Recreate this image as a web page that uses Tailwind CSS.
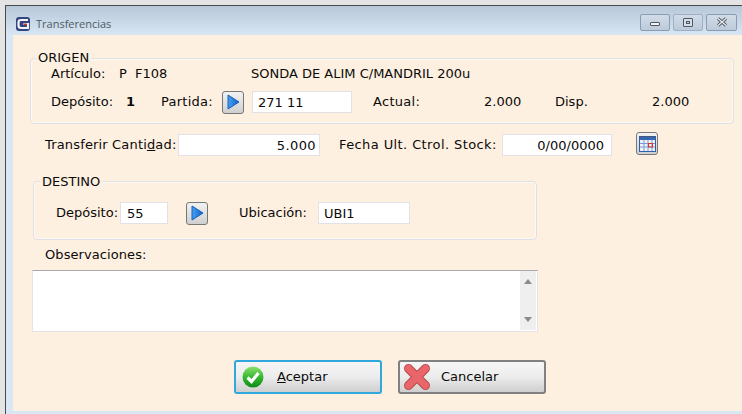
<!DOCTYPE html>
<html><head><meta charset="utf-8">
<script src="https://cdn.jsdelivr.net/npm/@tailwindcss/browser@4"></script>
</head>
<body class="m-0 overflow-hidden">
<div class="w-[742px] h-[414px] overflow-hidden bg-[#e4e4e4] pt-[5px] pl-[5px] font-['DejaVu_Sans',sans-serif] text-[13px] text-[#0a0a0a]">
  <svg width="0" height="0" class="absolute"><defs><linearGradient id="pl" x1="0" x2="1" y1="0" y2="0"><stop offset="0" stop-color="#4aa0f0"/><stop offset="1" stop-color="#0f62cc"/></linearGradient><linearGradient id="gl" x1="0" x2="0" y1="0" y2="1"><stop offset="0" stop-color="#8ee06f"/><stop offset=".55" stop-color="#2fb52a"/><stop offset="1" stop-color="#118a1a"/></linearGradient></defs></svg>
  <div class="w-[737px] h-[409px] border-l border-t border-[#4a4a4a] bg-[#d9e6f3] flex flex-col">
    <div class="h-[29px] shrink-0 flex items-center bg-gradient-to-b from-[#b7c8d9] to-[#d8e6f3] pl-[10px] pr-0">
      <svg width="14" height="14" viewBox="0 0 14 14" class="mt-[7px]"><rect width="14" height="14" rx="3" fill="#36457f"/><path d="M12 3H5Q2.5 3 2.5 5.5V8.5Q2.5 11 5 11H12V7H7.5" fill="none" stroke="#f2f4f8" stroke-width="2.2"/><rect x="8" y="6.5" width="3" height="1.6" fill="#d8342b"/></svg>
      <span class="ml-[6px] mt-[7px] font-['Open_Sans',sans-serif] text-[11px] text-[#4e5a66]">Transferencias</span>
      <div class="ml-auto flex gap-[3px] mt-[3px] mr-[5px]">
        <div class="w-[30px] h-[17px] rounded-[2px] border border-[#8a9cb4] bg-gradient-to-b from-[#d2dce8] to-[#bccadb] flex items-center justify-center"><div class="w-[10px] h-[4px] mt-[4px] bg-[#f4f4f4] border border-[#4c5560] rounded-[1px]"></div></div>
        <div class="w-[30px] h-[17px] rounded-[2px] border border-[#a0b0c4] bg-gradient-to-b from-[#d2dce8] to-[#bccadb] flex items-center justify-center"><div class="w-[10px] h-[9px] border border-[#4c5560] bg-[#d5dde8] flex items-center justify-center rounded-[1px]"><div class="w-[4px] h-[3px] border border-[#4c5560]"></div></div></div>
        <div class="w-[31px] h-[17px] rounded-[2px] border border-[#8a9cb4] bg-gradient-to-b from-[#d2dce8] to-[#bccadb] flex items-center justify-center"><svg width="12" height="10" viewBox="0 0 12 10"><path d="M2 1.5 L10 8.5 M10 1.5 L2 8.5" stroke="#4c5560" stroke-width="3"/><path d="M2 1.5 L10 8.5 M10 1.5 L2 8.5" stroke="#f2f2f2" stroke-width="1.2"/></svg></div>
      </div>
    </div>
    <div class="ml-[7px] h-[376px] bg-[#fef0e0] flex flex-col">
      <!-- ORIGEN -->
      <div class="relative ml-[17px] mt-[23px] w-[704px] h-[66px] border border-[#dfe0e6] shadow-[inset_0_0_0_1px_#fdf8f2] rounded-[4px]">
        <span class="absolute left-[5px] top-[-9px] bg-[#fef0e0] px-[2px] leading-[16px]">ORIGEN</span>
        <div class="flex items-center h-[16px] mt-[7px] ml-[20px]">
          <span class="w-[68px]">Artículo:</span><span class="w-[132px] whitespace-pre">P  F108</span><span>SONDA DE ALIM C/MANDRIL 200u</span>
        </div>
        <div class="flex items-center h-[22px] mt-[9px] ml-[20px]">
          <span class="w-[75px]">Depósito:</span><span class="w-[35px] font-bold">1</span><span class="w-[61px] tracking-[0.25px]">Partida:</span>
          <div class="w-[22px] h-[23px] rounded-[3px] border border-[#777] bg-gradient-to-b from-[#f2f2f2] to-[#cfcfcf] flex items-center justify-center"><svg width="13" height="16" viewBox="0 0 13 16"><path d="M1 1 L12 8 L1 15Z" fill="url(#pl)" stroke="#1560b8" stroke-width="1"/></svg></div>
          <div class="ml-[8px] w-[100px] h-[22px] bg-white border border-[#e2e2e6] pl-[5px] leading-[22px]">271 11</div>
          <span class="ml-[21px] w-[111px] tracking-[0.3px]">Actual:</span><span class="w-[71px]">2.000</span><span class="w-[97px]">Disp.</span><span>2.000</span>
        </div>
      </div>
      <!-- cantidad -->
      <div class="flex items-center h-[32px] mt-[5px]">
        <span class="ml-[32px] w-[133px] tracking-[0.16px] whitespace-nowrap">Transferir Canti<u>d</u>ad:</span>
        <div class="w-[142px] h-[22px] bg-white border border-[#e2e2e6] text-right pr-[3px] tracking-[0.4px] leading-[22px]">5.000</div>
        <span class="ml-[19px] w-[163px] tracking-[0.4px] whitespace-nowrap">Fecha Ult. Ctrol. Stock:</span>
        <div class="w-[110px] h-[22px] bg-white border border-[#e2e2e6] text-right pr-[7px] leading-[22px]">0/00/0000</div>
        <div class="ml-[24px] w-[22px] h-[23px] mt-[-4px] rounded-[3px] border border-[#777] bg-gradient-to-b from-[#f2f2f2] to-[#cfcfcf] flex items-center justify-center">
          <svg width="17" height="17" viewBox="0 0 17 17"><rect x=".5" y="1.5" width="16" height="15" fill="#eef2fa" stroke="#2f5fa8"/><rect x="1" y="2" width="15" height="3" fill="#3a66b0"/><path d="M1 1V2M3 1V2M5 1V2M7 1V2M9 1V2M11 1V2M13 1V2M15 1V2" stroke="#555"/><path d="M1 8.5H16M1 12H16M5 5V16M9 5V16M13 5V16" stroke="#7d9bd0" stroke-width="1"/><rect x="9.5" y="8.5" width="4" height="3.5" fill="none" stroke="#e03020"/></svg>
        </div>
      </div>
      <!-- DESTINO -->
      <div class="relative ml-[20px] mt-[20px] w-[504px] h-[59px] border border-[#dfe0e6] shadow-[inset_0_0_0_1px_#fdf8f2] rounded-[4px]">
        <span class="absolute left-[6px] top-[-8px] bg-[#fef0e0] px-[2px] leading-[16px]">DESTINO</span>
        <div class="flex items-center h-[22px] mt-[20px] ml-[22px]">
          <span class="w-[64px]">Depósito:</span>
          <div class="w-[48px] h-[22px] bg-white border border-[#e2e2e6] pl-[6px] leading-[22px]">55</div>
          <div class="ml-[18px] w-[22px] h-[23px] rounded-[3px] border border-[#777] bg-gradient-to-b from-[#f2f2f2] to-[#cfcfcf] flex items-center justify-center"><svg width="13" height="16" viewBox="0 0 13 16"><path d="M1 1 L12 8 L1 15Z" fill="url(#pl)" stroke="#1560b8" stroke-width="1"/></svg></div>
          <span class="ml-[31px] w-[79px]">Ubicación:</span>
          <div class="w-[92px] h-[22px] bg-white border border-[#e2e2e6] pl-[5px] leading-[22px]">UBI1</div>
        </div>
      </div>
      <div class="ml-[32px] mt-[7px] leading-[16px] tracking-[0.08px]">Observaciones:</div>
      <!-- textarea -->
      <div class="ml-[19px] mt-[7px] w-[506px] h-[62px] bg-white border border-[#e4e4e8] border-t-[#a9a9a9] flex justify-end">
        <div class="w-[16px] bg-[#efefef] mr-[1px] mb-[1px] flex flex-col justify-between items-center py-[8px]">
          <div class="w-0 h-0 border-x-[4px] border-x-transparent border-b-[5px] border-b-[#8a8a8a]"></div>
          <div class="w-0 h-0 border-x-[4px] border-x-transparent border-t-[5px] border-t-[#8a8a8a]"></div>
        </div>
      </div>
      <!-- buttons -->
      <div class="flex ml-[221px] mt-[28px] gap-[16px]">
        <div class="w-[148px] h-[34px] rounded-[3px] border-2 border-[#31a8dc] bg-gradient-to-b from-[#f6f6f6] via-[#ececec] to-[#cfcfcf] flex items-center pl-[6px]">
          <svg width="22" height="22" viewBox="0 0 22 22"><circle cx="11" cy="11" r="10.5" fill="url(#gl)"/><path d="M5.5 11.5 L9.5 15.5 L16.5 7" fill="none" stroke="#fff" stroke-width="3.2"/></svg>
          <span class="ml-[13px]"><u>A</u>ceptar</span>
        </div>
        <div class="w-[148px] h-[34px] rounded-[3px] border-2 border-[#808080] bg-gradient-to-b from-[#f6f6f6] via-[#ececec] to-[#cfcfcf] flex items-center pl-[4px]">
          <svg width="26" height="26" viewBox="0 0 26 26"><path d="M4.5 4.5 L21.5 21.5 M21.5 4.5 L4.5 21.5" stroke="#b84a4e" stroke-width="9" stroke-linecap="round"/><path d="M4.5 4.5 L21.5 21.5 M21.5 4.5 L4.5 21.5" stroke="#e8666a" stroke-width="7" stroke-linecap="round"/></svg>
          <span class="ml-[11px]">Cancelar</span>
        </div>
      </div>
    </div>
  </div>
</div>
</body></html>
